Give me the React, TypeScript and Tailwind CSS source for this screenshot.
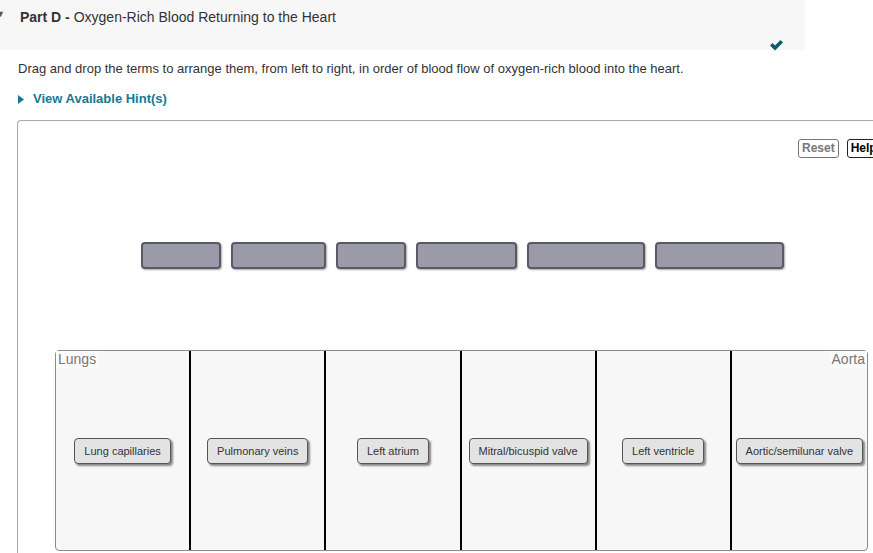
export default function App() {
  const targets = [80, 95, 70, 101, 118, 129];
  const terms = [
    'Lung capillaries',
    'Pulmonary veins',
    'Left atrium',
    'Mitral/bicuspid valve',
    'Left ventricle',
    'Aortic/semilunar valve',
  ];

  return (
    <div className="w-[873px] h-[553px] overflow-hidden bg-white text-[#333] font-['Liberation_Sans',Arial,sans-serif]">
      {/* header */}
      <div className="relative w-[805px] h-[50px] bg-[#f7f7f7]">
        <span className="absolute left-[-4px] top-[8px] text-[9px] text-[#555]">▼</span>
        <div className="pl-5 pt-[9px] text-[14px] leading-4 text-[#333]">
          <span className="font-bold">Part D - </span>Oxygen-Rich Blood Returning to the Heart
        </div>
        <svg className="absolute left-[769px] top-[39px]" width="15" height="12" viewBox="0 0 15 12">
          <path d="M1 6.5 L3.5 4 L6 6.5 L11.5 1 L14 3.5 L6 11.5 Z" fill="#0d5a6c" />
        </svg>
      </div>

      <p className="mt-[11px] pl-[18px] text-[13px] leading-[16px] text-[#333]">
        Drag and drop the terms to arrange them, from left to right, in order of blood flow of oxygen-rich blood into the heart.
      </p>

      <div className="mt-[14px] pl-[18px] flex items-center gap-[9px] text-[13px] leading-[16px] font-bold text-[#147a94]">
        <svg width="6" height="9" viewBox="0 0 6 9">
          <path d="M0 0 L6 4.5 L0 9 Z" fill="#147a94" />
        </svg>
        View Available Hint(s)
      </div>

      {/* activity box */}
      <div className="mt-[13px] ml-[17px] w-[880px] h-[440px] border-t border-l border-[#aaa] rounded-tl-[4px]">
        <div className="pt-[18px] pl-[780px] flex gap-2 text-[12px] leading-[15px]">
          <button className="h-[19px] px-[3px] border border-[#777] rounded-[3px] bg-white text-[#777] font-bold">
            Reset
          </button>
          <button className="h-[19px] px-[3px] border border-[#222] rounded-[3px] bg-white text-black font-bold">
            Help
          </button>
        </div>

        <div className="mt-[84px] pl-[123px] flex gap-[10px]">
          {targets.map((w, i) => (
            <div
              key={i}
              style={{ width: w }}
              className="h-[27px] rounded-[4px] border-2 border-[#5a5a66] bg-[#9a9aa9] shadow-[1px_1px_2px_rgba(0,0,0,0.35)]"
            />
          ))}
        </div>

        <div className="relative mt-[81px] ml-[37px] w-[813px] h-[201px] border border-[#8a8a9a] rounded-[4px] bg-[#f7f7f7]">
          <div className="h-full grid grid-cols-6 divide-x-2 divide-black">
            {terms.map((t) => (
              <div key={t} className="flex justify-center pt-[87px]">
                <div className="h-[26px] px-[9px] flex items-center rounded-[4px] border border-[#555] bg-[#e3e3e3] text-[11px] text-[#333] shadow-[2px_2px_2px_rgba(0,0,0,0.45)] whitespace-nowrap">
                  {t}
                </div>
              </div>
            ))}
          </div>
          <span className="absolute left-0 top-0 px-[2px] bg-[#fbfbfb] text-[14px] leading-[17px] text-[#777]">Lungs</span>
          <span className="absolute right-0 top-0 px-[2px] bg-[#fbfbfb] text-[14px] leading-[17px] text-[#777]">Aorta</span>
        </div>
      </div>
    </div>
  );
}
